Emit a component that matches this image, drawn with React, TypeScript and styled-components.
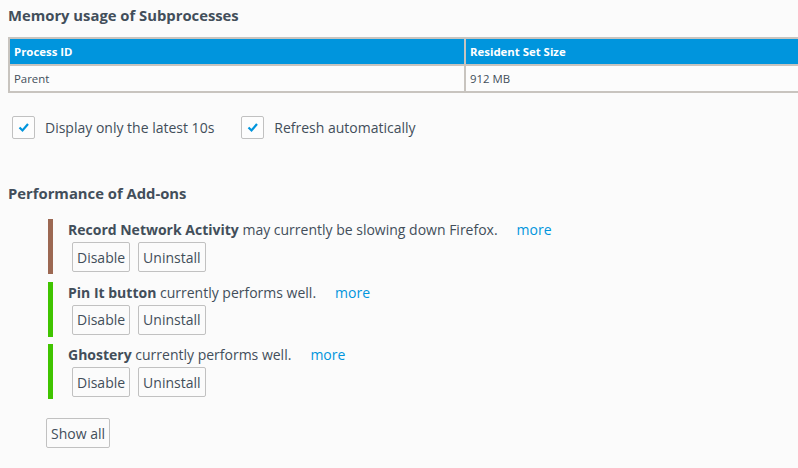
import React from 'react';
import styled, { createGlobalStyle } from 'styled-components';

// Styles
const GlobalStyle = createGlobalStyle`
  html,
  body {
    margin: 0;
    overflow: hidden;
    background: #fbfbfb;
    color: #424e5a;
    font-family: 'Open Sans', 'Noto Sans', sans-serif;
  }
`;

const Page = styled.div`
  padding: 5px 8px 0;
`;

const Heading = styled.h2<{ $gap?: number }>`
  margin: ${(p) => p.$gap ?? 0}px 0 0;
  font-size: 14.8px;
  font-weight: 700;
  line-height: 20px;
`;

// the table is wider than the window, cut at the right edge
const TableClip = styled.div`
  margin: 12px -8px 0 0;
  overflow: hidden;
`;

const Table = styled.table`
  width: 914px;
  border-collapse: collapse;
  border: 2px solid #c8c4bf;
  table-layout: fixed;
  font-size: 11.4px;

  th,
  td {
    height: 25px;
    padding: 0 4px;
    border: 2px solid #c8c4bf;
    text-align: left;
    vertical-align: middle;
  }

  th {
    background: #0095dd;
    color: #fff;
    font-weight: 700;
  }

  td {
    background: #fcfcfc;
  }
`;

const Options = styled.div`
  display: flex;
  align-items: center;
  margin-top: 23px;
  padding-left: 4px;
`;

const Option = styled.label`
  display: flex;
  align-items: center;
  gap: 10px;
  margin-right: 27px;
  font-size: 14px;
  line-height: 23px;
`;

const Box = styled.span`
  display: flex;
  align-items: center;
  justify-content: center;
  width: 21px;
  height: 21px;
  border: 1px solid #c1c1c1;
  border-radius: 2px;
  background: #fdfdfd;

  svg {
    width: 21px;
    height: 21px;
  }
`;

const AddonList = styled.div`
  display: flex;
  flex-direction: column;
  gap: 7.5px;
  margin-top: 16px;
  padding-left: 40px;
`;

const Addon = styled.div<{ $color: string }>`
  height: 55px;
  box-sizing: border-box;
  padding-left: 15px;
  border-left: 5px solid ${(p) => p.$color};
`;

const AddonText = styled.div`
  font-size: 14px;
  line-height: 22px;
  white-space: nowrap;

  b {
    font-weight: 700;
  }

  a {
    margin-left: 19px;
    color: #0095dd;
    text-decoration: none;
  }
`;

const Actions = styled.div`
  display: flex;
  gap: 8px;
  margin-top: 1px;
  padding-left: 4px;
`;

const Button = styled.button`
  height: 30px;
  padding: 0 4px;
  border: 1px solid #c1c1c1;
  border-radius: 2px;
  background: #fbfbfb;
  color: #424e5a;
  font-family: inherit;
  font-size: 14px;
`;

const ShowAll = styled(Button)`
  margin: 19px 0 0 38px;
`;

const Check = () => (
  <svg viewBox="0 0 21 21">
    <polyline points="6.5,10.5 9.5,13.5 15,7" fill="none" stroke="#0095dd" strokeWidth="2.2" />
  </svg>
);

const addons = [
  { name: 'Record Network Activity', text: 'may currently be slowing down Firefox.', color: '#9c6852' },
  { name: 'Pin It button', text: 'currently performs well.', color: '#40c400' },
  { name: 'Ghostery', text: 'currently performs well.', color: '#40c400' },
];

const App: React.FC = () => {
  return (
    <Page>
      <GlobalStyle />
      <Heading>Memory usage of Subprocesses</Heading>
      <TableClip>
        <Table>
          <thead>
            <tr>
              <th>Process ID</th>
              <th>Resident Set Size</th>
            </tr>
          </thead>
          <tbody>
            <tr>
              <td>Parent</td>
              <td>912 MB</td>
            </tr>
          </tbody>
        </Table>
      </TableClip>
      <Options>
        <Option>
          <Box>
            <Check />
          </Box>
          Display only the latest 10s
        </Option>
        <Option>
          <Box>
            <Check />
          </Box>
          Refresh automatically
        </Option>
      </Options>
      <Heading $gap={44}>Performance of Add-ons</Heading>
      <AddonList>
        {addons.map((a) => (
          <Addon key={a.name} $color={a.color}>
            <AddonText>
              <b>{a.name}</b> {a.text}
              <a href="#">more</a>
            </AddonText>
            <Actions>
              <Button>Disable</Button>
              <Button>Uninstall</Button>
            </Actions>
          </Addon>
        ))}
      </AddonList>
      <ShowAll>Show all</ShowAll>
    </Page>
  );
};

export default App;
